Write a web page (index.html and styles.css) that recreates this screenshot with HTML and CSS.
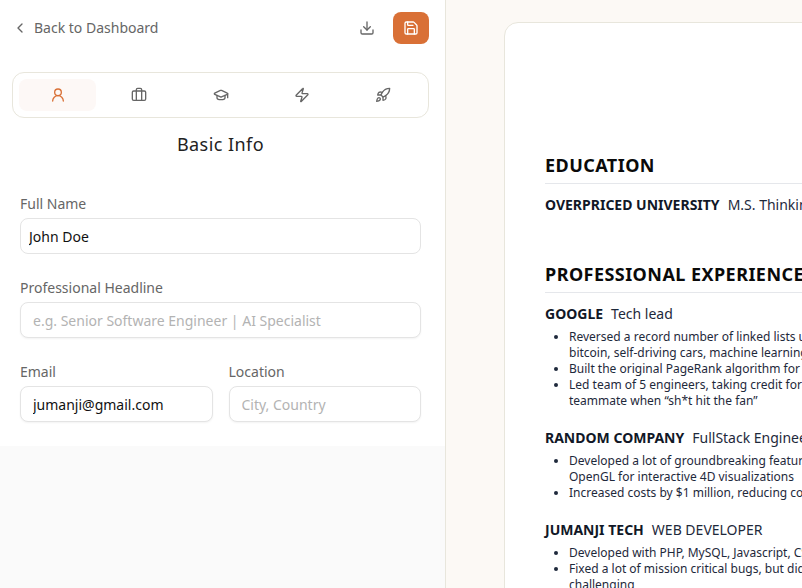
FILE: index.html
```html
<!DOCTYPE html>
<html lang="en">
<head>
<meta charset="utf-8">
<title>Resume Editor</title>
<link rel="stylesheet" href="styles.css">
</head>
<body>
<div class="app">
  <aside class="sidebar">
    <div class="editor">
      <header class="toolbar">
        <a class="back"><svg class="icon" viewBox="0 0 24 24"><path d="m15 18-6-6 6-6"/></svg><span>Back to Dashboard</span></a>
        <div class="actions">
          <button class="btn" aria-label="Download"><svg class="icon" viewBox="0 0 24 24"><path d="M21 15v4a2 2 0 0 1-2 2H5a2 2 0 0 1-2-2v-4"/><path d="m7 10 5 5 5-5"/><path d="M12 15V3"/></svg></button>
          <button class="btn primary" aria-label="Save"><svg class="icon" viewBox="0 0 24 24"><path d="M15.2 3a2 2 0 0 1 1.4.6l3.8 3.8a2 2 0 0 1 .6 1.4V19a2 2 0 0 1-2 2H5a2 2 0 0 1-2-2V5a2 2 0 0 1 2-2z"/><path d="M17 21v-7a1 1 0 0 0-1-1H8a1 1 0 0 0-1 1v7"/><path d="M7 3v4a1 1 0 0 0 1 1h7"/></svg></button>
        </div>
      </header>
      <nav class="tabs">
        <button class="tab active" aria-label="Basic Info"><svg class="icon" viewBox="0 0 24 24"><circle cx="12" cy="8" r="5"/><path d="M20 21a8 8 0 0 0-16 0"/></svg></button>
        <button class="tab" aria-label="Experience"><svg class="icon" viewBox="0 0 24 24"><path d="M16 20V4a2 2 0 0 0-2-2h-4a2 2 0 0 0-2 2v16"/><rect width="20" height="14" x="2" y="6" rx="2"/></svg></button>
        <button class="tab" aria-label="Education"><svg class="icon" viewBox="0 0 24 24"><path d="M21.42 10.922a1 1 0 0 0-.019-1.838L12.83 5.18a2 2 0 0 0-1.66 0L2.6 9.08a1 1 0 0 0 0 1.832l8.57 3.908a2 2 0 0 0 1.66 0z"/><path d="M22 10v6"/><path d="M6 12.5V16a6 3 0 0 0 12 0v-3.5"/></svg></button>
        <button class="tab" aria-label="Skills"><svg class="icon" viewBox="0 0 24 24"><path d="M4 14a1 1 0 0 1-.78-1.63l9.9-10.2a.5.5 0 0 1 .86.46l-1.92 6.02A1 1 0 0 0 13 10h7a1 1 0 0 1 .78 1.63l-9.9 10.2a.5.5 0 0 1-.86-.46l1.92-6.02A1 1 0 0 0 11 14z"/></svg></button>
        <button class="tab" aria-label="Projects"><svg class="icon" viewBox="0 0 24 24"><path d="M4.5 16.5c-1.5 1.26-2 5-2 5s3.74-.5 5-2c.71-.84.7-2.13-.09-2.91a2.18 2.18 0 0 0-2.91-.09z"/><path d="m12 15-3-3a22 22 0 0 1 2-3.95A12.88 12.88 0 0 1 22 2c0 2.72-.78 7.5-6 11a22.35 22.35 0 0 1-4 2z"/><path d="M9 12H4s.55-3.03 2-4c1.62-1.08 5 0 5 0"/><path d="M12 15v5s3.03-.55 4-2c1.08-1.62 0-5 0-5"/></svg></button>
      </nav>
      <h1 class="title">Basic Info</h1>
      <form class="form">
        <label class="field"><span>Full Name</span><input class="input name" value="John Doe"></label>
        <label class="field"><span>Professional Headline</span><input class="input" placeholder="e.g. Senior Software Engineer | AI Specialist"></label>
        <div class="row">
          <label class="field"><span>Email</span><input class="input" value="jumanji@gmail.com"></label>
          <label class="field"><span>Location</span><input class="input" placeholder="City, Country"></label>
        </div>
      </form>
    </div>
  </aside>
  <main class="preview">
    <article class="paper">
      <section class="section">
        <h2>EDUCATION</h2>
        <div class="entry"><h3><b>OVERPRICED UNIVERSITY</b><span>M.S. Thinkin</span></h3></div>
      </section>
      <section class="section">
        <h2>PROFESSIONAL EXPERIENCE</h2>
        <div class="entry">
          <h3><b>GOOGLE</b><span>Tech lead</span></h3>
          <ul>
            <li>Reversed a record number of linked lists u<br>bitcoin, self-driving cars, machine learning</li>
            <li>Built the original PageRank algorithm for</li>
            <li>Led team of 5 engineers, taking credit for<br>teammate when “sh*t hit the fan”</li>
          </ul>
        </div>
        <div class="entry">
          <h3><b>RANDOM COMPANY</b><span>FullStack Enginee</span></h3>
          <ul>
            <li>Developed a lot of groundbreaking featur<br>OpenGL for interactive 4D visualizations</li>
            <li>Increased costs by $1 million, reducing co</li>
          </ul>
        </div>
        <div class="entry">
          <h3><b>JUMANJI TECH</b><span>WEB DEVELOPER</span></h3>
          <ul>
            <li>Developed with PHP, MySQL, Javascript, CS</li>
            <li>Fixed a lot of mission critical bugs, but did<br>challenging</li>
          </ul>
        </div>
      </section>
    </article>
  </main>
</div>
</body>
</html>
```
FILE: styles.css
```css
* { box-sizing: border-box; }
body {
  margin: 0;
  overflow: hidden;
  font-family: "Noto Sans", sans-serif;
  font-size: 14px;
  line-height: 20px;
  color: #666;
}
button, input { font: inherit; }
.app { display: flex; height: 588px; overflow: hidden; }
.sidebar {
  flex: 0 0 446px;
  background: #fafafa;
  border-right: 1px solid #e8e6dc;
}
.editor { height: 446px; background: #fff; padding: 12px 16px 0 12px; }
.icon {
  display: block;
  flex: none;
  width: 16px;
  height: 16px;
  fill: none;
  stroke: currentColor;
  stroke-width: 2;
  stroke-linecap: round;
  stroke-linejoin: round;
}
.toolbar { display: flex; justify-content: space-between; align-items: center; height: 32px; }
.back { display: flex; align-items: center; gap: 6px; }
.actions { display: flex; gap: 8px; }
.btn {
  display: flex;
  align-items: center;
  justify-content: center;
  width: 36px;
  height: 32px;
  padding: 0;
  border: 0;
  border-radius: 8px;
  background: transparent;
  color: #666;
}
.primary { background: #d97036; color: #fff; }
.tabs {
  display: flex;
  gap: 4px;
  height: 46px;
  margin-top: 28px;
  padding: 6px;
  border: 1px solid #e8e6dc;
  border-radius: 12px;
}
.tab {
  display: flex;
  flex: 1;
  align-items: center;
  justify-content: center;
  padding: 0;
  border: 0;
  border-radius: 8px;
  background: transparent;
  color: #666;
}
.active { background: #fdf8f6; color: #d97036; }
.title {
  margin: 12px 0 0;
  font-size: 18px;
  font-weight: 400;
  line-height: 28px;
  letter-spacing: .45px;
  text-align: center;
  color: #222;
}
.form { display: flex; flex-direction: column; gap: 24px; padding: 36px 8px 0; }
.field { display: flex; flex: 1; flex-direction: column; gap: 4px; min-width: 0; }
.row { display: flex; gap: 16px; }
.input {
  width: 100%;
  height: 36px;
  padding: 4px 12px;
  border: 1px solid #e4e4e4;
  border-radius: 8px;
  outline: 0;
  background: #fff;
  color: #111;
  box-shadow: 0 1px 2px rgba(0, 0, 0, .05);
}
.name { padding: 4px 8px; box-shadow: none; }
.input::placeholder { color: #b3b3b3; opacity: 1; }
.preview { flex: 1; min-width: 0; background: #fcf9f5; padding: 22px 0 0 58px; overflow: hidden; }
.paper {
  width: 794px;
  height: 1123px;
  padding: 128px 40px 40px;
  background: #fff;
  border: 1px solid #e8e6dc;
  border-radius: 14px;
  white-space: nowrap;
  color: #1e293b;
}
.section { margin-bottom: 45px; }
h2 {
  margin: 0 0 11px;
  padding-bottom: 4px;
  border-bottom: 1px solid #e5e7eb;
  font-size: 18px;
  line-height: 28px;
  letter-spacing: .45px;
  font-weight: 700;
  color: #0a0a0a;
}
.entry { margin-bottom: 19px; }
h3 { display: flex; gap: 8px; margin: 0; font-size: 14px; line-height: 20px; font-weight: 400; }
h3 b { font-weight: 700; color: #111827; }
ul { margin: 5px 0 0; padding-left: 24px; font-size: 12px; line-height: 16px; }
```
